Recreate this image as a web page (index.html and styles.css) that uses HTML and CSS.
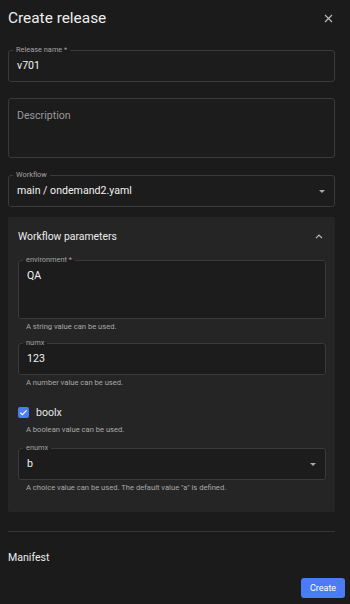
FILE: index.html
```html
<!DOCTYPE html>
<html lang="en">
<head>
<meta charset="utf-8">
<title>Create release</title>
<link rel="stylesheet" href="styles.css">
</head>
<body>
<div class="dialog">
  <div class="header">
    <h1 class="title">Create release</h1>
    <button class="close" aria-label="Close">
      <svg width="9" height="9" viewBox="0 0 9 9"><path d="M1 1L8 8M8 1L1 8" stroke="#b9b9b9" stroke-width="1.2" fill="none"/></svg>
    </button>
  </div>

  <fieldset class="field f-name">
    <legend>Release name *</legend>
    <div class="value">v701</div>
  </fieldset>

  <div class="field plain f-desc">
    <div class="placeholder">Description</div>
  </div>

  <fieldset class="field f-workflow">
    <legend>Workflow</legend>
    <div class="value select">
      <span>main / ondemand2.yaml</span>
      <svg class="caret" width="6" height="3" viewBox="0 0 6 3"><path d="M0 0H6L3 3Z" fill="#a9a9a9"/></svg>
    </div>
  </fieldset>

  <section class="panel">
    <div class="panel-head">
      <span>Workflow parameters</span>
      <svg width="8" height="5" viewBox="0 0 8 5"><path d="M1 4.2L4 1.2L7 4.2" stroke="#bdbdbd" stroke-width="1.2" fill="none"/></svg>
    </div>

    <fieldset class="field inner f-env">
      <legend>environment *</legend>
      <div class="value">QA</div>
    </fieldset>
    <div class="helper">A string value can be used.</div>

    <fieldset class="field inner f-num">
      <legend>numx</legend>
      <div class="value">123</div>
    </fieldset>
    <div class="helper">A number value can be used.</div>

    <label class="check-row">
      <span class="checkbox">
        <svg width="11" height="11" viewBox="0 0 11 11"><path d="M2.3 5.6L4.4 7.7L8.7 3.3" stroke="#fff" stroke-width="1.2" fill="none"/></svg>
      </span>
      <span class="check-label">boolx</span>
    </label>
    <div class="helper h-bool">A boolean value can be used.</div>

    <fieldset class="field inner f-enum">
      <legend>enumx</legend>
      <div class="value select">
        <span>b</span>
        <svg class="caret" width="6" height="3" viewBox="0 0 6 3"><path d="M0 0H6L3 3Z" fill="#a9a9a9"/></svg>
      </div>
    </fieldset>
    <div class="helper">A choice value can be used. The default value "a" is defined.</div>
  </section>

  <hr class="divider">

  <div class="manifest">Manifest</div>

  <div class="actions">
    <button class="create">Create</button>
  </div>
</div>
</body>
</html>
```

FILE: styles.css
```css
* { box-sizing: border-box; }

html, body {
  margin: 0;
  padding: 0;
  background: #1b1b1b;
}

body {
  font-family: Roboto, "Liberation Sans", sans-serif;
  color: #ececec;
  width: 350px;
  height: 604px;
  overflow: hidden;
}

.dialog {
  display: flex;
  flex-direction: column;
  padding: 0 15px 0 8px;
}

.header {
  display: flex;
  align-items: center;
  justify-content: space-between;
  height: 22px;
  margin-top: 7px;
}

.title {
  margin: 0;
  font-size: 15.4px;
  line-height: 22px;
  font-weight: 400;
  color: #ededed;
}

.close {
  background: none;
  border: 0;
  padding: 0;
  margin-right: 2px;
  width: 9px;
  height: 9px;
  display: flex;
}

.field {
  margin: 0;
  padding: 0 8px 4px;
  border: 1px solid #3a3a3a;
  border-radius: 3px;
  min-width: 0;
  height: 37px;
  background: #1c1c1c;
}

.field legend {
  font-size: 7.4px;
  line-height: 10px;
  padding: 0 3px;
  margin-left: -4px;
  color: #a3a3a3;
}

.value {
  font-size: 10.6px;
  line-height: 22px;
  color: #f2f2f2;
}

.select {
  display: flex;
  align-items: center;
  justify-content: space-between;
}

.caret {
  margin-right: 1px;
}

.f-name { margin-top: 16px; }

.plain {
  height: 60px;
  margin-top: 16px;
  padding: 10px 8px;
}

.placeholder {
  font-size: 10.6px;
  line-height: 13px;
  color: #9a9a9a;
}

.f-workflow { margin-top: 12px; }

.panel {
  margin-top: 10px;
  background: #252525;
  border-radius: 2px;
  padding: 0 9px 19px 10px;
  display: flex;
  flex-direction: column;
}

.panel-head {
  height: 38px;
  display: flex;
  align-items: center;
  justify-content: space-between;
  font-size: 10.4px;
  color: #ececec;
  padding-right: 3px;
}

.inner { background: #1c1c1c; }

.f-env { height: 64px; }

.f-num { margin-top: 6px; }

.f-enum { margin-top: 8px; }

.helper {
  font-size: 7.6px;
  line-height: 10px;
  color: #a9a9a9;
  padding-left: 8px;
  margin-top: 3px;
}

.check-row {
  display: flex;
  align-items: center;
  height: 20px;
  margin-top: 14px;
}

.checkbox {
  width: 11px;
  height: 11px;
  border-radius: 2px;
  background: #4a7cf6;
  display: flex;
}

.check-label {
  margin-left: 7px;
  font-size: 10.6px;
  color: #e6e6e6;
}

.divider {
  margin: 19px 0 0;
  border: 0;
  border-top: 1px solid #363636;
  height: 0;
}

.manifest {
  margin-top: 19px;
  font-size: 10.6px;
  line-height: 14px;
  color: #ececec;
}

.actions {
  display: flex;
  justify-content: flex-end;
  margin-top: 13px;
  margin-right: -10px;
}

.create {
  width: 44px;
  height: 20px;
  border: 0;
  border-radius: 3px;
  background: #4a7cf6;
  color: #fff;
  font-family: inherit;
  font-size: 9px;
  padding: 0;
}
```
